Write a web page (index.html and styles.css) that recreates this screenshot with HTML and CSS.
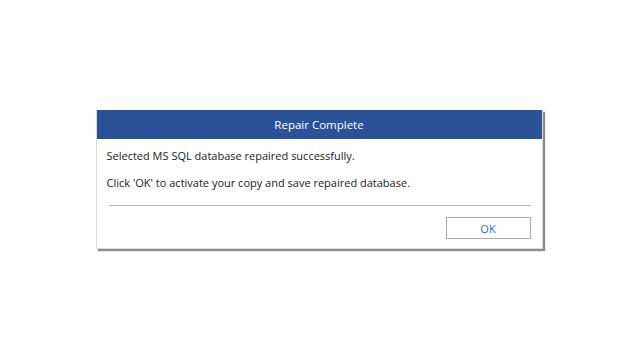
FILE: index.html
```html
<!DOCTYPE html>
<html lang="en">
<head>
    <meta charset="UTF-8">
    <title>Repair Complete</title>
    <link rel="stylesheet" href="styles.css">
</head>
<body>
    <div class="dialog">
        <div class="dialog-title">Repair Complete</div>
        <div class="dialog-body">
            <p class="message">Selected MS SQL database repaired successfully.</p>
            <p class="message">Click 'OK' to activate your copy and save repaired database.</p>
        </div>
        <div class="dialog-footer">
            <button class="ok-btn">OK</button>
        </div>
    </div>
</body>
</html>
```

FILE: styles.css
```css
body {
    margin: 0;
    padding: 0;
    display: flex;
    justify-content: center;
    align-items: center;
    height: 100vh;
    background-color: #fff;
    font-family: 'Open Sans', 'Noto Sans', sans-serif;
}

.dialog {
    width: 445px;
    background-color: #fff;
    border: 1px solid #dcdcdc;
    border-top: none;
    box-shadow: 2px 2px 1px #8a8a8a;
}

.dialog-title {
    height: 29px;
    line-height: 29px;
    background-color: #2b5199;
    color: #fff;
    text-align: center;
    font-size: 11.5px;
}

.dialog-body {
    padding: 9px 10px 3px 10px;
}

.message {
    margin: 0 0 11px 0;
    font-size: 11px;
    line-height: 16px;
    color: #1a1a1a;
}

.dialog-footer {
    margin: 0 11px 0 12px;
    padding: 11px 0 9px 0;
    border-top: 1px solid #b4b4b4;
    display: flex;
    justify-content: flex-end;
}

.ok-btn {
    width: 85px;
    height: 22px;
    background-color: #fff;
    border: 1px solid #a8a8a8;
    color: #1f6fe0;
    font-family: 'Open Sans', 'Noto Sans', sans-serif;
    font-size: 11px;
    padding: 0;
}
```
